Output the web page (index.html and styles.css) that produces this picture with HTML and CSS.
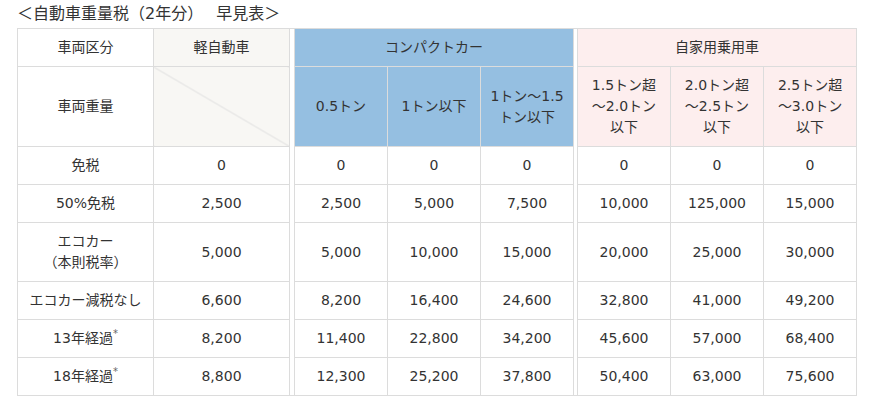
FILE: index.html
```html
<!DOCTYPE html>
<html lang="ja">
<head>
<meta charset="utf-8">
<link rel="stylesheet" href="styles.css">
</head>
<body>
<div class="page">
  <h2 class="title">＜自動車重量税（2年分）　 早見表＞</h2>
  <table class="tax">
    <colgroup>
      <col class="c-label">
      <col class="c-kei">
      <col class="c-gap1">
      <col class="c-num"><col class="c-num"><col class="c-num">
      <col class="c-gap2">
      <col class="c-num"><col class="c-num"><col class="c-num">
    </colgroup>
    <tbody>
      <tr>
        <td>車両区分</td>
        <td class="kei">軽自動車</td>
        <td class="gap" rowspan="8"></td>
        <td class="blue" colspan="3">コンパクトカー</td>
        <td class="gap" rowspan="8"></td>
        <td class="pink" colspan="3">自家用乗用車</td>
      </tr>
      <tr class="weights">
        <td>車両重量</td>
        <td class="kei diag"></td>
        <td class="blue">0.5トン</td>
        <td class="blue">1トン以下</td>
        <td class="blue">1トン～1.5<br>トン以下</td>
        <td class="pink">1.5トン超<br>～2.0トン<br>以下</td>
        <td class="pink">2.0トン超<br>～2.5トン<br>以下</td>
        <td class="pink">2.5トン超<br>～3.0トン<br>以下</td>
      </tr>
      <tr>
        <td>免税</td><td>0</td><td>0</td><td>0</td><td>0</td><td>0</td><td>0</td><td>0</td>
      </tr>
      <tr>
        <td>50%免税</td><td>2,500</td><td>2,500</td><td>5,000</td><td>7,500</td><td>10,000</td><td>125,000</td><td>15,000</td>
      </tr>
      <tr>
        <td>エコカー<br>（本則税率）</td><td>5,000</td><td>5,000</td><td>10,000</td><td>15,000</td><td>20,000</td><td>25,000</td><td>30,000</td>
      </tr>
      <tr>
        <td>エコカー減税なし</td><td>6,600</td><td>8,200</td><td>16,400</td><td>24,600</td><td>32,800</td><td>41,000</td><td>49,200</td>
      </tr>
      <tr>
        <td>13年経過<sup>*</sup></td><td>8,200</td><td>11,400</td><td>22,800</td><td>34,200</td><td>45,600</td><td>57,000</td><td>68,400</td>
      </tr>
      <tr>
        <td>18年経過<sup>*</sup></td><td>8,800</td><td>12,300</td><td>25,200</td><td>37,800</td><td>50,400</td><td>63,000</td><td>75,600</td>
      </tr>
    </tbody>
  </table>
</div>
</body>
</html>
```
FILE: styles.css
```css
html, body {
  margin: 0;
  padding: 0;
  background: #fff;
}

body {
  font-family: "DejaVu Sans", "Noto Sans CJK JP", sans-serif;
  color: #333;
}

.page {
  padding: 0 0 0 17px;
}

.title {
  margin: 0;
  font-size: 16px;
  font-weight: normal;
  line-height: 28px;
  height: 28px;
  color: #333;
  white-space: pre;
}

.tax {
  border-collapse: collapse;
  table-layout: fixed;
  width: 840px;
  font-size: 14px;
  line-height: 21px;
}

.c-label, .c-kei { width: 136px; }
.c-gap1 { width: 5px; }
.c-gap2 { width: 4px; }
.c-num { width: 93px; }

.tax td {
  border: 1px solid #dcdcdc;
  padding: 8px 0;
  text-align: center;
  vertical-align: middle;
  white-space: nowrap;
}

.tax td.gap {
  padding: 0;
  background: #fff;
}

.tax .kei { background: #f8f7f4; }
.tax .blue { background: #95bfe1; }
.tax .pink { background: #fdeeee; }

.tax .diag {
  background-color: #f8f7f4;
  background-image: linear-gradient(to top right, transparent calc(50% - 0.8px), #dcdcdc 50%, transparent calc(50% + 0.8px));
}

.tax sup {
  font-size: 10px;
  line-height: 1;
  color: #666;
}
```
